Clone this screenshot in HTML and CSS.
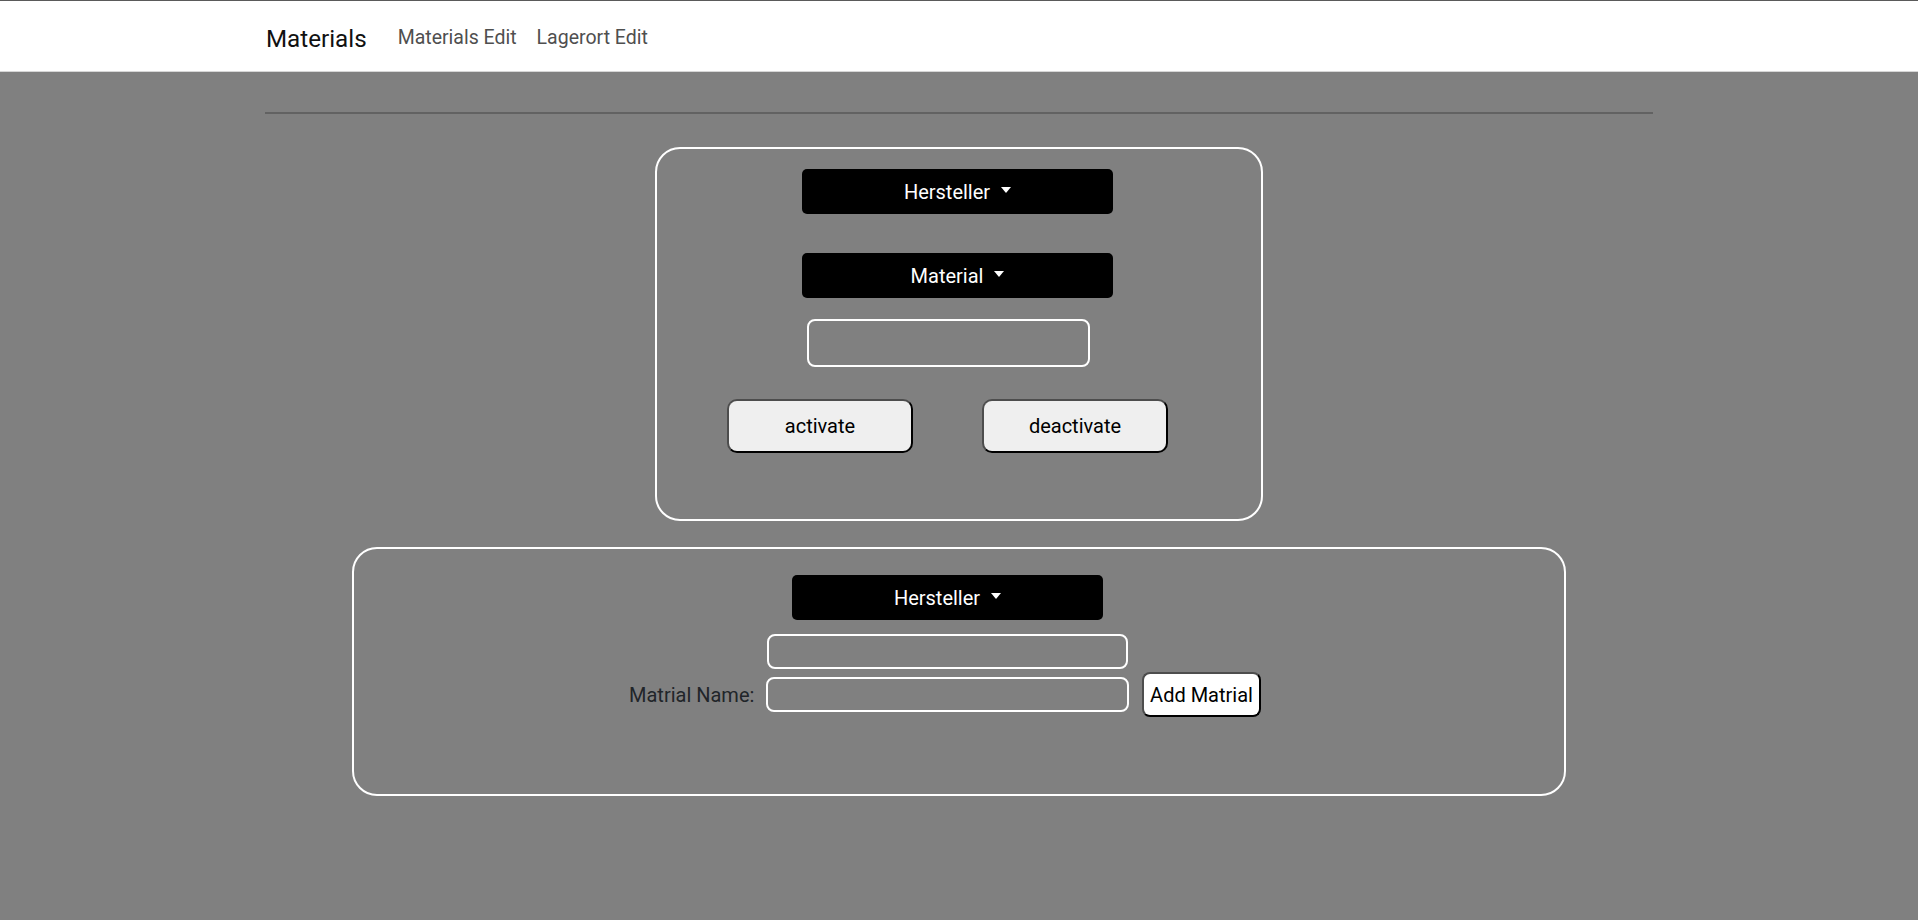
FILE: index.html
```html
<!DOCTYPE html>
<html lang="de">
<head>
<meta charset="utf-8">
<title>Materials</title>
<link rel="stylesheet" href="styles.css">
</head>
<body>
<nav class="navbar">
  <div class="nav-inner">
    <a class="brand" href="#">Materials</a>
    <ul class="nav">
      <li><a class="nav-link" href="#">Materials Edit</a></li>
      <li><a class="nav-link" href="#">Lagerort Edit</a></li>
    </ul>
  </div>
</nav>
<main class="page">
  <hr class="rule">
  <section class="card card-status">
    <button class="dropdown dd-first" type="button">Hersteller<span class="caret"></span></button>
    <button class="dropdown dd-second" type="button">Material<span class="caret"></span></button>
    <input class="field field-status" type="text">
    <div class="btn-row">
      <button class="action" type="button">activate</button>
      <button class="action" type="button">deactivate</button>
    </div>
  </section>
  <section class="card card-add">
    <button class="dropdown dd-add" type="button">Hersteller<span class="caret"></span></button>
    <input class="field field-top" type="text">
    <div class="add-row">
      <label class="add-label" for="matname">Matrial Name:</label>
      <input class="field field-name" id="matname" type="text">
      <button class="add-btn" type="button">Add Matrial</button>
    </div>
  </section>
</main>
</body>
</html>
```
FILE: styles.css
```css
* { box-sizing: border-box; }

html, body {
  margin: 0;
  padding: 0;
}

body {
  background: #808080;
  font-family: Roboto, "Liberation Sans", sans-serif;
  font-size: 20px;
  line-height: 1.5;
  color: #212529;
}

.navbar {
  background: #fff;
  border-top: 1px solid #5a5a5a;
  border-bottom: 1px solid #d6d6d6;
  height: 72px;
}

.nav-inner {
  width: 1388px;
  margin: 0 auto;
  height: 100%;
  display: flex;
  align-items: flex-start;
  padding-left: 1px;
}

.brand {
  font-size: 24.2px;
  color: #111;
  text-decoration: none;
  margin-right: 21px;
  margin-top: 20px;
}

.nav {
  list-style: none;
  margin: 0;
  padding: 0;
  display: flex;
  margin-top: 22px;
}

.nav-link {
  display: block;
  padding: 0 10px;
  color: #4f4f4f;
  text-decoration: none;
  font-size: 19.5px;
}

.page {
  width: 1388px;
  margin: 0 auto;
  display: flex;
  flex-direction: column;
  align-items: center;
}

.rule {
  align-self: stretch;
  margin: 40px 0 0;
  border: 0;
  height: 2px;
  background: #626262;
}

.card {
  border: 2px solid #fff;
  border-radius: 25px;
  display: flex;
  flex-direction: column;
  align-items: center;
}

.card-status {
  width: 608px;
  margin-top: 33px;
  padding: 20px 0 66px;
}

.card-add {
  width: 1214px;
  margin-top: 26px;
  padding: 26px 0 77px;
}

.dropdown {
  width: 311px;
  height: 45px;
  background: #000;
  color: #fff;
  border: 0;
  border-radius: 5px;
  font-family: inherit;
  font-size: 20px;
  padding: 0;
  display: flex;
  align-items: center;
  justify-content: center;
}

.caret {
  display: inline-block;
  width: 0;
  height: 0;
  border-top: 6px solid #fff;
  border-left: 5.5px solid transparent;
  border-right: 5.5px solid transparent;
  margin-left: 11px;
  margin-bottom: 3px;
}

.dd-first { margin-right: 3px; }
.dd-second { margin-top: 39px; margin-right: 3px; }
.dd-add { margin-right: 23px; }

.field {
  background: transparent;
  border: 2px solid #fff;
  border-radius: 8px;
  font-family: inherit;
  font-size: 20px;
  padding: 0 8px;
  color: #000;
}

.field-status {
  width: 283px;
  height: 48px;
  margin-top: 21px;
  margin-right: 21px;
}

.btn-row {
  display: flex;
  gap: 69px;
  margin-top: 32px;
  margin-right: 23px;
}

.action {
  width: 186px;
  height: 54px;
  background: #efefef;
  border: 2px solid #000;
  border-top-color: #4d4d4d;
  border-left-color: #4d4d4d;
  border-radius: 10px;
  font-family: inherit;
  font-size: 20px;
  color: #000;
  padding: 0;
}

.field-top {
  width: 361px;
  height: 35px;
  margin-top: 14px;
  margin-right: 23px;
}

.add-row {
  display: flex;
  align-items: center;
  gap: 13px;
  margin-top: 3px;
  margin-right: 28px;
}

.add-label {
  width: 124px;
  text-align: right;
  color: #212529;
  white-space: nowrap;
}

.field-name {
  width: 363px;
  height: 35px;
}

.add-btn {
  width: 119px;
  height: 45px;
  background: #fff;
  border: 2px solid #000;
  border-top-color: #4d4d4d;
  border-left-color: #4d4d4d;
  border-radius: 8px;
  font-family: inherit;
  font-size: 20px;
  color: #000;
  padding: 0;
}
```
